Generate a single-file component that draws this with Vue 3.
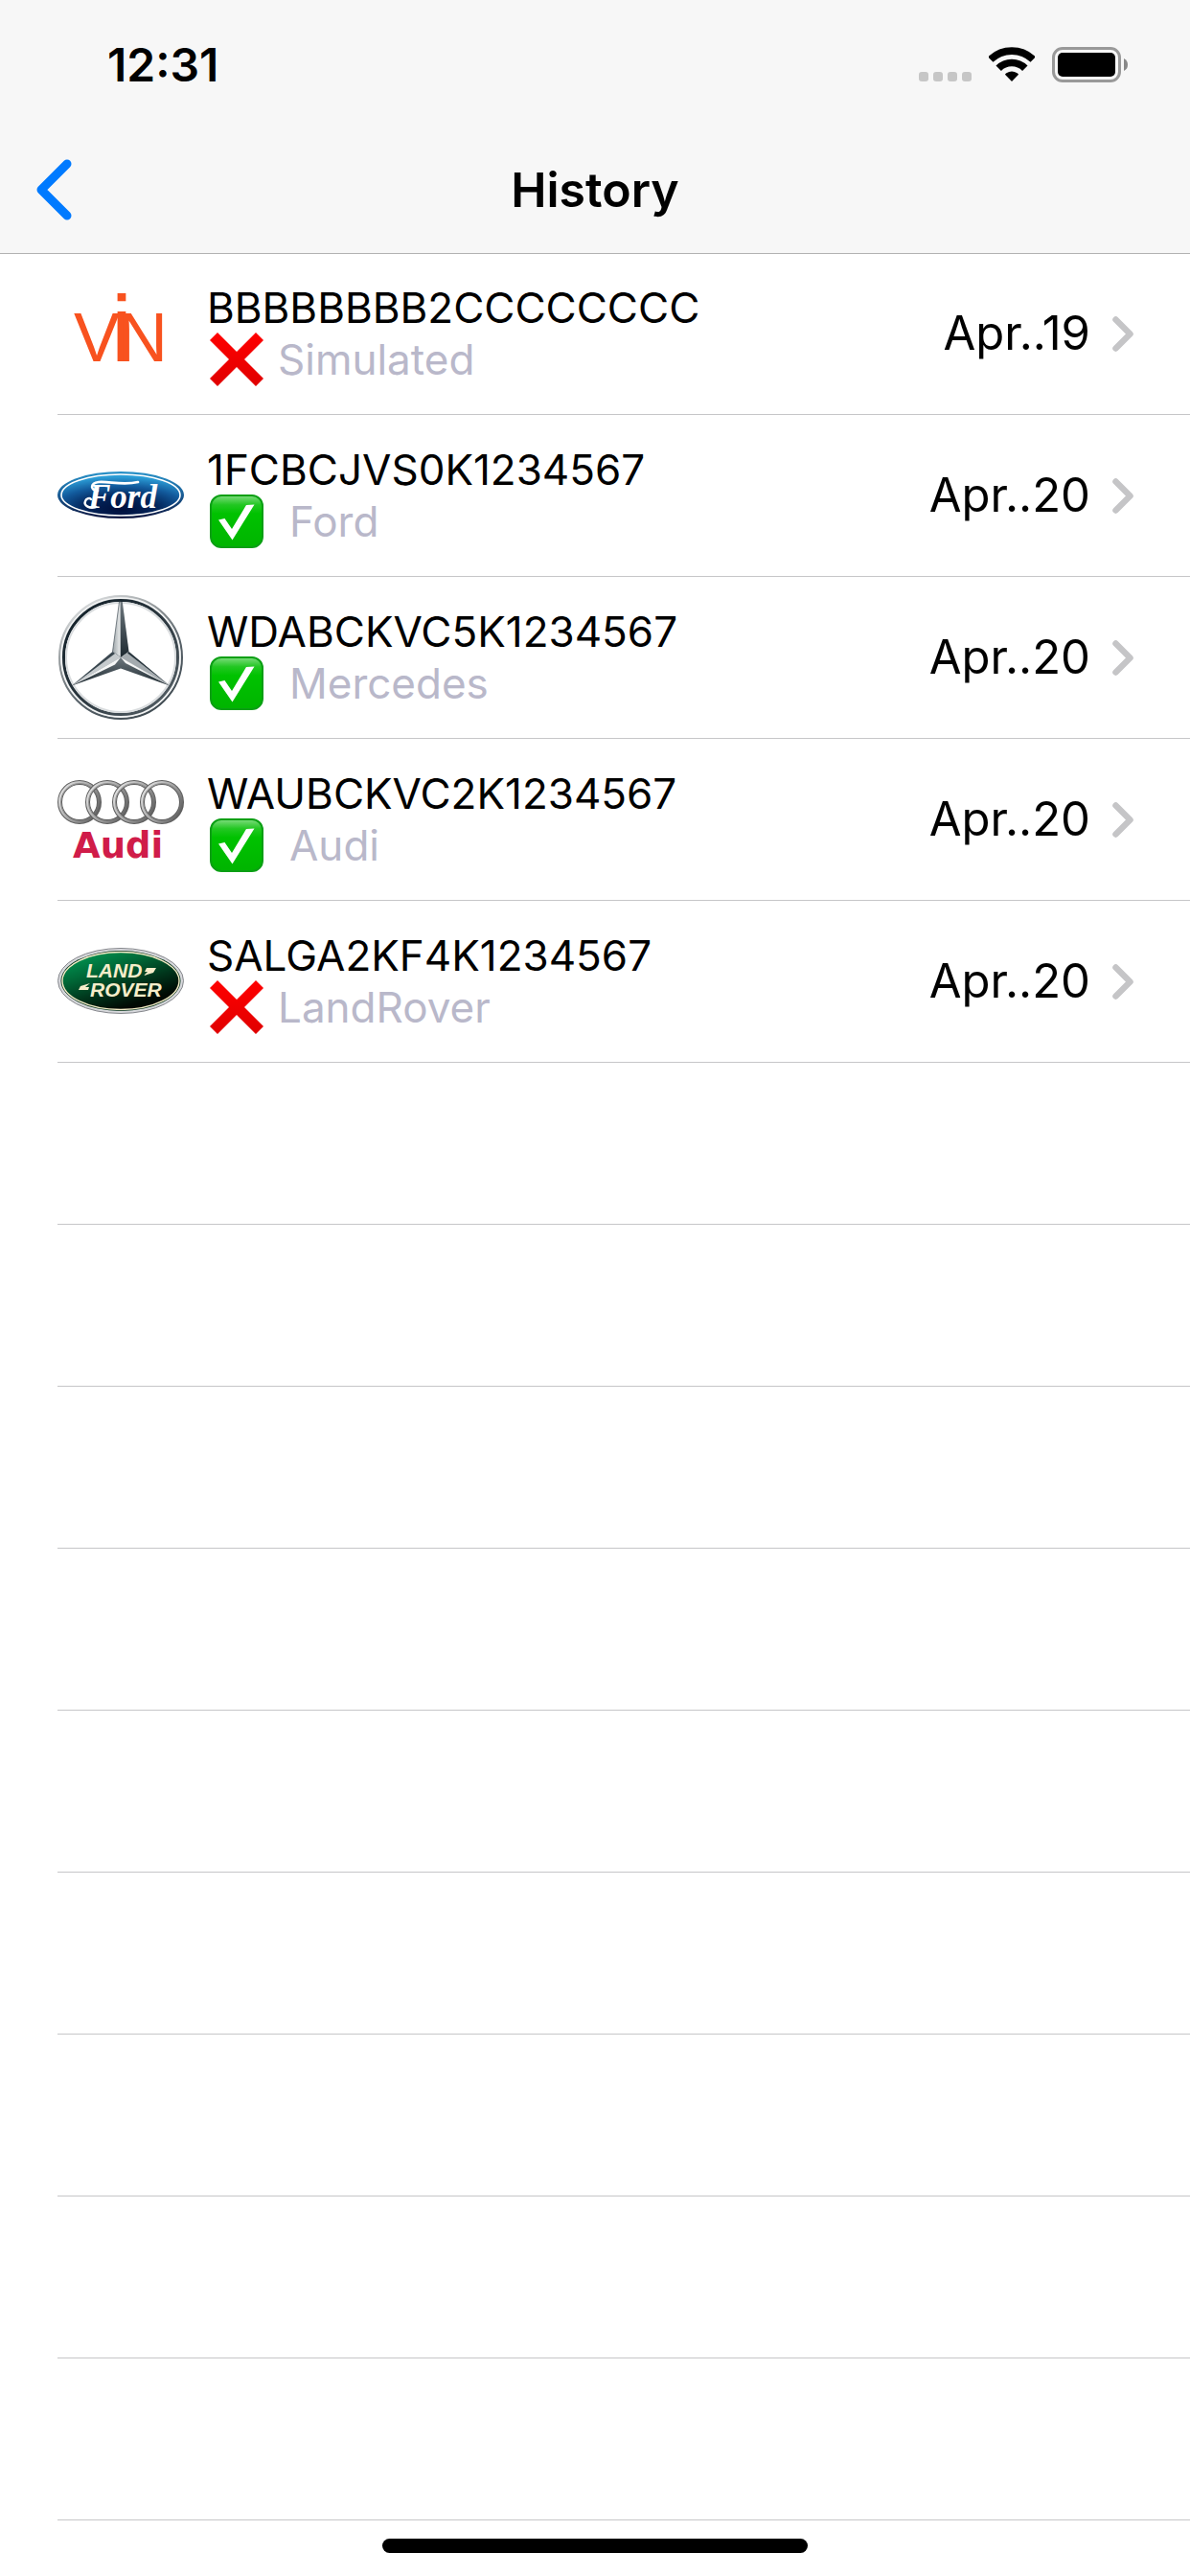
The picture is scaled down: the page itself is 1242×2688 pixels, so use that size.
<script setup>
const entries = [
  { vin: 'BBBBBBBB2CCCCCCCC', make: 'Simulated', valid: false, date: 'Apr..19', logo: 'vin' },
  { vin: '1FCBCJVS0K1234567', make: 'Ford', valid: true, date: 'Apr..20', logo: 'ford' },
  { vin: 'WDABCKVC5K1234567', make: 'Mercedes', valid: true, date: 'Apr..20', logo: 'mercedes' },
  { vin: 'WAUBCKVC2K1234567', make: 'Audi', valid: true, date: 'Apr..20', logo: 'audi' },
  { vin: 'SALGA2KF4K1234567', make: 'LandRover', valid: false, date: 'Apr..20', logo: 'rover' },
]
const emptyRows = 9
const audiRings = [23, 52, 80, 109]
</script>

<template>
  <div class="screen">
    <header class="header">
      <div class="status">
        <time class="clock">12:31</time>
        <div class="indicators">
          <svg width="55" height="11" viewBox="0 0 55 11" role="img" aria-label="No cellular signal">
            <g fill="#c6c6c6">
              <rect v-for="n in 4" :key="n" :x="(n - 1) * 15" y="0" width="10" height="10" rx="3" />
            </g>
          </svg>
          <svg width="48" height="37" viewBox="0 0 48 37" role="img" aria-label="Wi-Fi">
            <g fill="none" stroke="#000" stroke-width="7.7">
              <path d="M1.8 13 A32 32 0 0 1 46.2 13" />
              <path d="M10.2 22.2 A19.5 19.5 0 0 1 37.8 22.2" />
            </g>
            <path d="M24 36 L17 28.8 Q17.2 28 18.4 27.2 Q24 23.6 29.6 27.2 Q30.8 28 31 28.8 Z" />
          </svg>
          <svg width="79" height="37" viewBox="0 0 79 37" role="img" aria-label="Battery full">
            <rect x="1.5" y="1.5" width="69" height="34" rx="9.5" fill="none" stroke="#999" stroke-width="3" />
            <rect x="6" y="6" width="60" height="25" rx="5" />
            <path d="M75 12 Q79 14 79 18.5 Q79 23 75 25 Z" fill="#888" />
          </svg>
        </div>
      </div>
      <nav class="nav">
        <button class="back" type="button" aria-label="Back">
          <svg width="38" height="64" viewBox="0 0 38 64">
            <path d="M33 5 L6 32 L33 59" fill="none" stroke="#007aff" stroke-width="9" stroke-linecap="round" stroke-linejoin="round" />
          </svg>
        </button>
        <h1 class="title">History</h1>
      </nav>
    </header>

    <main>
      <ul class="list">
        <li v-for="entry in entries" :key="entry.vin" class="item">
          <a class="row" href="#">
            <svg v-if="entry.logo === 'vin'" class="logo" viewBox="0 0 132 132" aria-hidden="true">
              <text x="17" y="95" fill="#f8521f" font-family="'Liberation Sans', Arial, sans-serif" font-size="72">V<tspan dx="-9" font-size="99">i</tspan><tspan dx="-15">N</tspan></text>
            </svg>

            <svg v-else-if="entry.logo === 'ford'" class="logo" viewBox="0 0 132 132" aria-hidden="true">
              <defs>
                <radialGradient id="fordBlue" cx="0.5" cy="0.85" r="0.8">
                  <stop offset="0" stop-color="#000f3c" />
                  <stop offset="0.4" stop-color="#03265c" />
                  <stop offset="0.7" stop-color="#125a9c" />
                  <stop offset="1" stop-color="#2c9fd8" />
                </radialGradient>
                <linearGradient id="fordRim" x1="0" y1="0" x2="0" y2="1">
                  <stop offset="0" stop-color="#2a93c9" />
                  <stop offset="0.5" stop-color="#1a5d96" />
                  <stop offset="1" stop-color="#0a123c" />
                </linearGradient>
              </defs>
              <ellipse cx="66" cy="65.5" rx="66" ry="24.5" fill="url(#fordRim)" />
              <ellipse cx="66" cy="65.5" rx="62" ry="21.5" fill="url(#fordBlue)" stroke="#fff" stroke-width="1.6" />
              <g fill="none" stroke="#fff" stroke-linecap="round">
                <path d="M42 61 C34 61 34 53 43 52 C54 51 68 56 84 52" stroke-width="2.600" />
                <path d="M40 78 C34 80 27 77 29 72 C30 69 34 68 35 70" stroke-width="2.400" />
              </g>
              <text x="32" y="79" fill="#fff" font-family="'Liberation Serif', 'Times New Roman', serif" font-size="35" font-style="italic" font-weight="700">Ford</text>
            </svg>

            <svg v-else-if="entry.logo === 'mercedes'" class="logo" viewBox="0 0 132 132" aria-hidden="true">
              <defs>
                <linearGradient id="mbOuter" x1="0.2" y1="0" x2="0.8" y2="1">
                  <stop offset="0" stop-color="#e4e6e7" />
                  <stop offset="0.35" stop-color="#8b9194" />
                  <stop offset="0.6" stop-color="#59636a" />
                  <stop offset="1" stop-color="#3c474e" />
                </linearGradient>
                <linearGradient id="mbInner" x1="0" y1="0" x2="1" y2="1">
                  <stop offset="0" stop-color="#0f1d26" />
                  <stop offset="0.5" stop-color="#2a363e" />
                  <stop offset="1" stop-color="#5c666c" />
                </linearGradient>
                <linearGradient id="mbLight" x1="0" y1="0" x2="1" y2="0">
                  <stop offset="0" stop-color="#9aa2a6" />
                  <stop offset="1" stop-color="#eef0f0" />
                </linearGradient>
                <linearGradient id="mbDark" x1="0" y1="0" x2="0" y2="1">
                  <stop offset="0" stop-color="#6d777d" />
                  <stop offset="1" stop-color="#1d2930" />
                </linearGradient>
              </defs>
              <circle cx="66" cy="66" r="62" fill="none" stroke="#d3d6d8" stroke-width="5" />
              <circle cx="66" cy="66" r="64" fill="none" stroke="url(#mbOuter)" stroke-width="2" />
              <circle cx="66" cy="66" r="62" fill="none" stroke="#f4f5f5" stroke-width="1.500" />
              <circle cx="66" cy="66" r="59.500" fill="none" stroke="url(#mbInner)" stroke-width="3" />
              <circle cx="66" cy="66" r="57" fill="none" stroke="#d9dcde" stroke-width="2" />
              <path d="M64.500 8 L66 8 L66 66 L57.500 60 Z" fill="url(#mbLight)" stroke="#46525a" stroke-width="0.700" />
              <path d="M66 8 L67.800 8 L74.500 60 L66 66 Z" fill="url(#mbDark)" />
              <path d="M57.500 60 L66 66 L15 95.500 Z" fill="#c6cbce" />
              <path d="M57.500 60 L60 62 L16 95 L15 95.500 Z" fill="#3a474f" />
              <path d="M66 66 L66 77.500 L15 95.500 Z" fill="url(#mbDark)" />
              <path d="M66 66 L15 95.500 L60 73.500 Z" fill="#f6f7f7" />
              <path d="M74.500 60 L66 66 L117 95.500 Z" fill="#a4abaf" />
              <path d="M74.500 60 L73 61.500 L117 95.500 Z" fill="#26333b" />
              <path d="M66 66 L66 77.500 L117 95.500 Z" fill="url(#mbDark)" />
              <path d="M66 66 L117 95.500 L71 72 Z" fill="#f6f7f7" />
            </svg>

            <svg v-else-if="entry.logo === 'audi'" class="logo" viewBox="0 0 132 132" aria-hidden="true">
              <defs>
                <linearGradient id="audiSilver" x1="0" y1="0.200" x2="1" y2="0.800">
                  <stop offset="0" stop-color="#e2e2e2" />
                  <stop offset="0.600" stop-color="#9a9a9a" />
                  <stop offset="1" stop-color="#5c5c5c" />
                </linearGradient>
              </defs>
              <g v-for="cx in audiRings" :key="cx" fill="none">
                <circle :cx="cx" cy="48" r="20.500" stroke="#5e5e5e" stroke-width="5" />
                <circle :cx="cx" cy="48" r="20.500" stroke="url(#audiSilver)" stroke-width="3" />
                <circle :cx="cx" cy="48" r="19.500" stroke="#777" stroke-width="0.700" />
              </g>
              <text x="16" y="106" fill="#d01c49" font-family="'DejaVu Sans', Verdana, sans-serif" font-size="37" font-weight="700">Audi</text>
            </svg>

            <svg v-else class="logo" viewBox="0 0 132 132" aria-hidden="true">
              <defs>
                <linearGradient id="roverGreen" x1="0.150" y1="0" x2="0.800" y2="1">
                  <stop offset="0" stop-color="#009a55" />
                  <stop offset="0.300" stop-color="#006a38" />
                  <stop offset="0.600" stop-color="#00331a" />
                  <stop offset="0.850" stop-color="#000a04" />
                </linearGradient>
              </defs>
              <ellipse cx="66" cy="65.500" rx="65.500" ry="34" fill="#d7d8dc" stroke="#85878c" stroke-width="1" />
              <ellipse cx="66" cy="65.500" rx="62.500" ry="31.500" fill="#04331c" />
              <ellipse cx="66" cy="65.500" rx="61" ry="30" fill="url(#roverGreen)" stroke="#f4ebc6" stroke-width="1.400" />
              <g fill="#f6edca" font-family="'Liberation Sans', Arial, sans-serif" font-size="21" font-style="italic" font-weight="700">
                <text x="30" y="62">LAND</text>
                <text x="34" y="82">ROVER</text>
              </g>
              <g fill="#f6edca">
                <path d="M93 52 L103 52 L100 57 L90 60 L94 56 L91 56 Z" />
                <path d="M34 68 L24 71 L22 75 L32 75 L33 72 L29 72 Z" />
              </g>
            </svg>

            <span class="details">
              <span class="vin">{{ entry.vin }}</span>
              <span class="make" :class="{ valid: entry.valid }">
                <svg v-if="entry.valid" class="mark" viewBox="0 0 56 56" role="img" aria-label="Valid">
                  <defs>
                    <linearGradient id="tickGreen" x1="0" y1="0" x2="0" y2="1">
                      <stop offset="0" stop-color="#7fdc7f" />
                      <stop offset="0.180" stop-color="#22c722" />
                      <stop offset="0.350" stop-color="#00c200" />
                      <stop offset="1" stop-color="#00b400" />
                    </linearGradient>
                  </defs>
                  <rect x="1" y="1" width="54" height="54" rx="11" fill="url(#tickGreen)" stroke="#0b9f14" stroke-width="2" />
                  <path d="M9 26.500 L15.500 25 L23 36 L38 11 L46.500 10.500 L23.500 47.500 Z" fill="#fff" />
                </svg>
                <svg v-else class="mark" viewBox="0 0 56 56" role="img" aria-label="Invalid">
                  <defs>
                    <linearGradient id="crossRed" x1="0" y1="0" x2="0" y2="1">
                      <stop offset="0" stop-color="#ff0000" />
                      <stop offset="1" stop-color="#e00000" />
                    </linearGradient>
                  </defs>
                  <path d="M8 0 L28 20 L48 0 L56 8 L36 28 L56 48 L48 56 L28 36 L8 56 L0 48 L20 28 L0 8 Z" fill="url(#crossRed)" />
                </svg>
                <span>{{ entry.make }}</span>
              </span>
            </span>
            <time class="date">{{ entry.date }}</time>
            <svg width="22" height="37" viewBox="0 0 22 37" aria-hidden="true">
              <path d="M3.500 3.500 L18.500 18.500 L3.500 33.500" fill="none" stroke="#c5c5c7" stroke-width="6.500" stroke-linecap="round" stroke-linejoin="round" />
            </svg>
          </a>
        </li>
        <li v-for="n in emptyRows" :key="'empty' + n" class="item" aria-hidden="true"></li>
      </ul>
    </main>

    <footer class="footer"><div class="home"></div></footer>
  </div>
</template>

<style>
body {
  margin: 0;
  background: #fff;
}
</style>

<style scoped>
.screen {
  display: flex;
  flex-direction: column;
  min-height: 100vh;
  background: #fff;
  color: #000;
  font-family: Inter, 'Liberation Sans', sans-serif;
}

svg {
  display: block;
  flex: none;
}

.header {
  background: #f7f7f7;
  box-shadow: 0 1px 0 #b2b2b2;
  z-index: 1;
}

.status {
  display: flex;
  justify-content: space-between;
  align-items: flex-start;
  box-sizing: border-box;
  height: 132px;
  padding: 40px 65px 0 112px;
}

.clock {
  font-size: 48px;
  font-weight: 600;
  line-height: 56px;
}

.indicators {
  display: flex;
  align-items: flex-end;
  gap: 18px;
  padding-top: 9px;
}

.nav {
  display: grid;
  grid-template-columns: 1fr auto 1fr;
  align-items: center;
  height: 132px;
}

.back {
  justify-self: start;
  padding: 0 37px;
  border: 0;
  background: none;
}

.title {
  margin: 0;
  font-size: 50px;
  font-weight: 600;
  line-height: 60px;
}

.list {
  margin: 0;
  padding: 0;
  list-style: none;
}

.item {
  box-sizing: border-box;
  height: 169px;
  margin-left: 60px;
  border-bottom: 1px solid #c6c6c8;
}

.row {
  display: flex;
  align-items: center;
  height: 100%;
  padding-right: 59px;
  color: inherit;
  text-decoration: none;
}

.logo {
  width: 132px;
  height: 132px;
  margin-right: 24px;
}

.details {
  display: flex;
  flex: 1;
  flex-direction: column;
  font-size: 44px;
  line-height: 54px;
}

.make {
  display: flex;
  align-items: center;
  gap: 15px;
  height: 54px;
  padding-left: 3px;
  color: #b9b8ca;
}

.make.valid {
  gap: 27px;
}

.mark {
  width: 56px;
  height: 56px;
}

.date {
  margin-right: 23px;
  font-size: 49px;
  line-height: 60px;
}

.footer {
  display: flex;
  justify-content: center;
  padding: 19px 0 24px;
}

.home {
  width: 444px;
  height: 15px;
  border-radius: 8px;
  background: #000;
}
</style>
